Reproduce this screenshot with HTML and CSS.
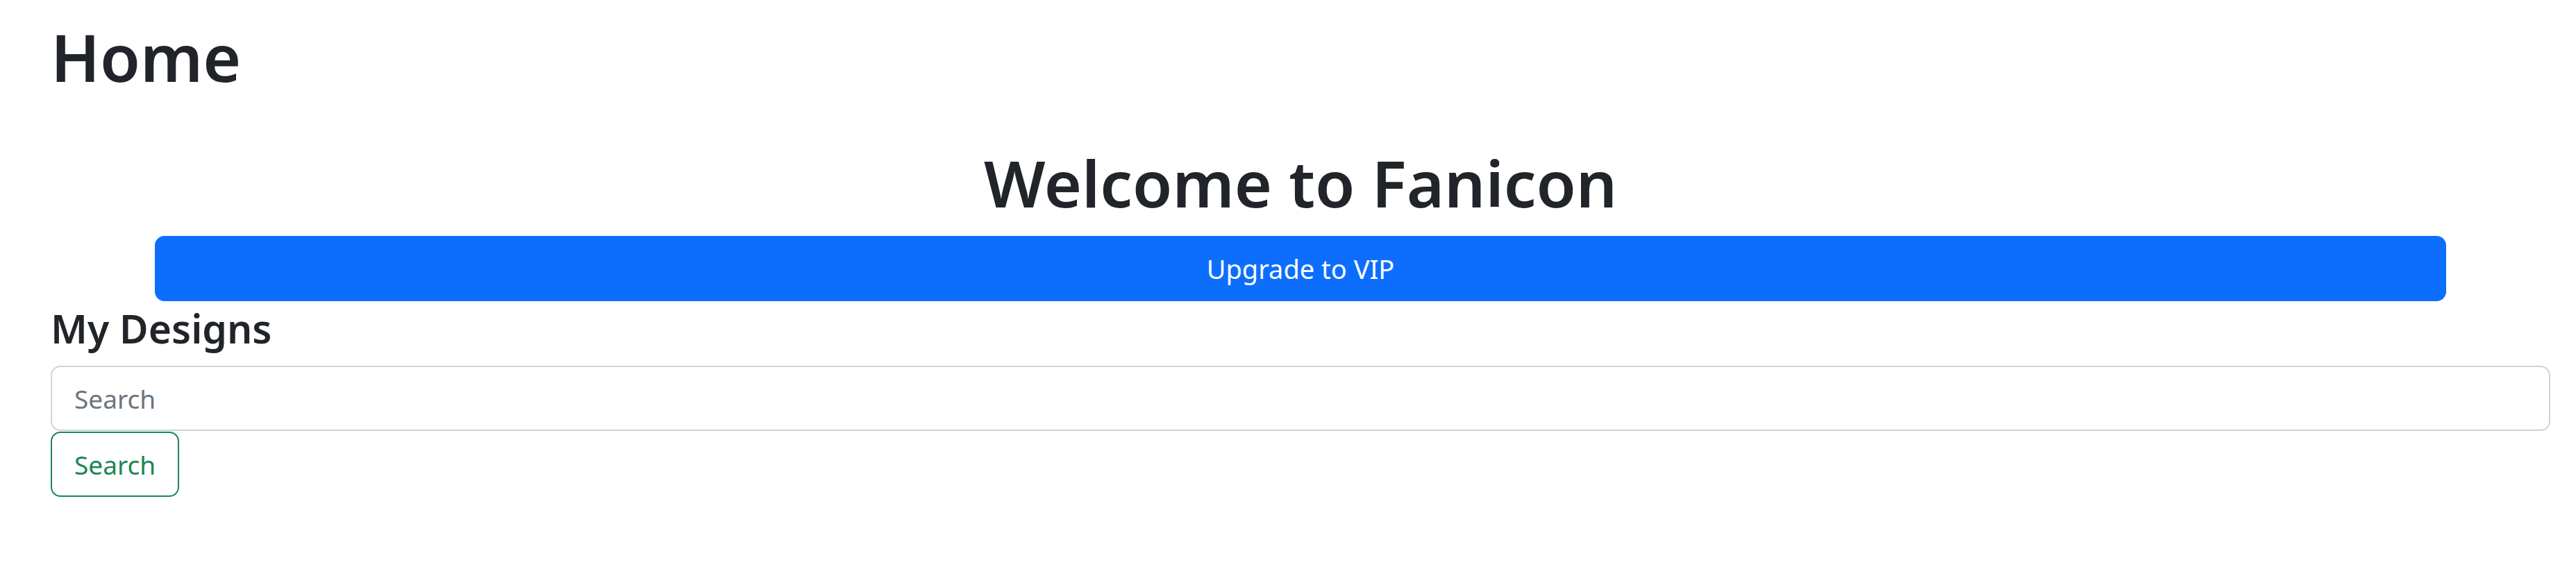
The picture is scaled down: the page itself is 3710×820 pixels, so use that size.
FILE: index.html
```html
<!DOCTYPE html>
<html lang="en">
<head>
<meta charset="utf-8">
<title>Home</title>
<link rel="stylesheet" href="styles.css">
</head>
<body>
<main class="page">
  <h1 class="page-title">Home</h1>
  <section class="welcome">
    <h1 class="welcome-title">Welcome to Fanicon</h1>
    <button class="btn btn-primary" type="button">Upgrade to VIP</button>
  </section>
  <section class="designs">
    <h3 class="designs-title">My Designs</h3>
    <input class="search-input" type="text" placeholder="Search">
    <button class="btn btn-outline-success" type="button">Search</button>
  </section>
</main>
</body>
</html>
```
FILE: styles.css
```css
* { box-sizing: border-box; }
html, body { margin: 0; padding: 0; background: #fff; }
body {
  font-family: "Noto Sans", "Open Sans", "Liberation Sans", sans-serif;
  color: #212529;
}
.page {
  padding: 0 37px 0 73px;
  display: flex;
  flex-direction: column;
}
.page-title {
  margin: 23px 0 0;
  font-size: 94px;
  line-height: 119px;
  font-weight: 600;
}
.welcome {
  display: flex;
  flex-direction: column;
  align-items: center;
}
.welcome-title {
  margin: 62px 0 0;
  font-size: 93px;
  line-height: 118px;
  font-weight: 600;
  text-align: center;
}
.btn {
  font-family: inherit;
  font-size: 37px;
  line-height: 1;
  border-radius: 14px;
  cursor: pointer;
}
.btn-primary {
  margin-top: 18px;
  width: 3300px;
  height: 94px;
  background: #0d6efd;
  border: 2px solid #0d6efd;
  color: #fff;
  font-size: 38px;
}
.designs {
  display: flex;
  flex-direction: column;
  align-items: flex-start;
}
.designs-title {
  margin: 2px 0 0;
  font-size: 57px;
  line-height: 74px;
  font-weight: 600;
}
.search-input {
  margin-top: 17px;
  width: 100%;
  height: 94px;
  padding: 0 32px;
  border: 2px solid #ced4da;
  border-radius: 14px;
  font-family: inherit;
  font-size: 37px;
  color: #212529;
  background: #fff;
}
.search-input::placeholder { color: #6c757d; }
.btn-outline-success {
  margin-top: 1px;
  height: 94px;
  padding: 0 32px;
  background: #fff;
  border: 2px solid #198754;
  color: #198754;
}
```
